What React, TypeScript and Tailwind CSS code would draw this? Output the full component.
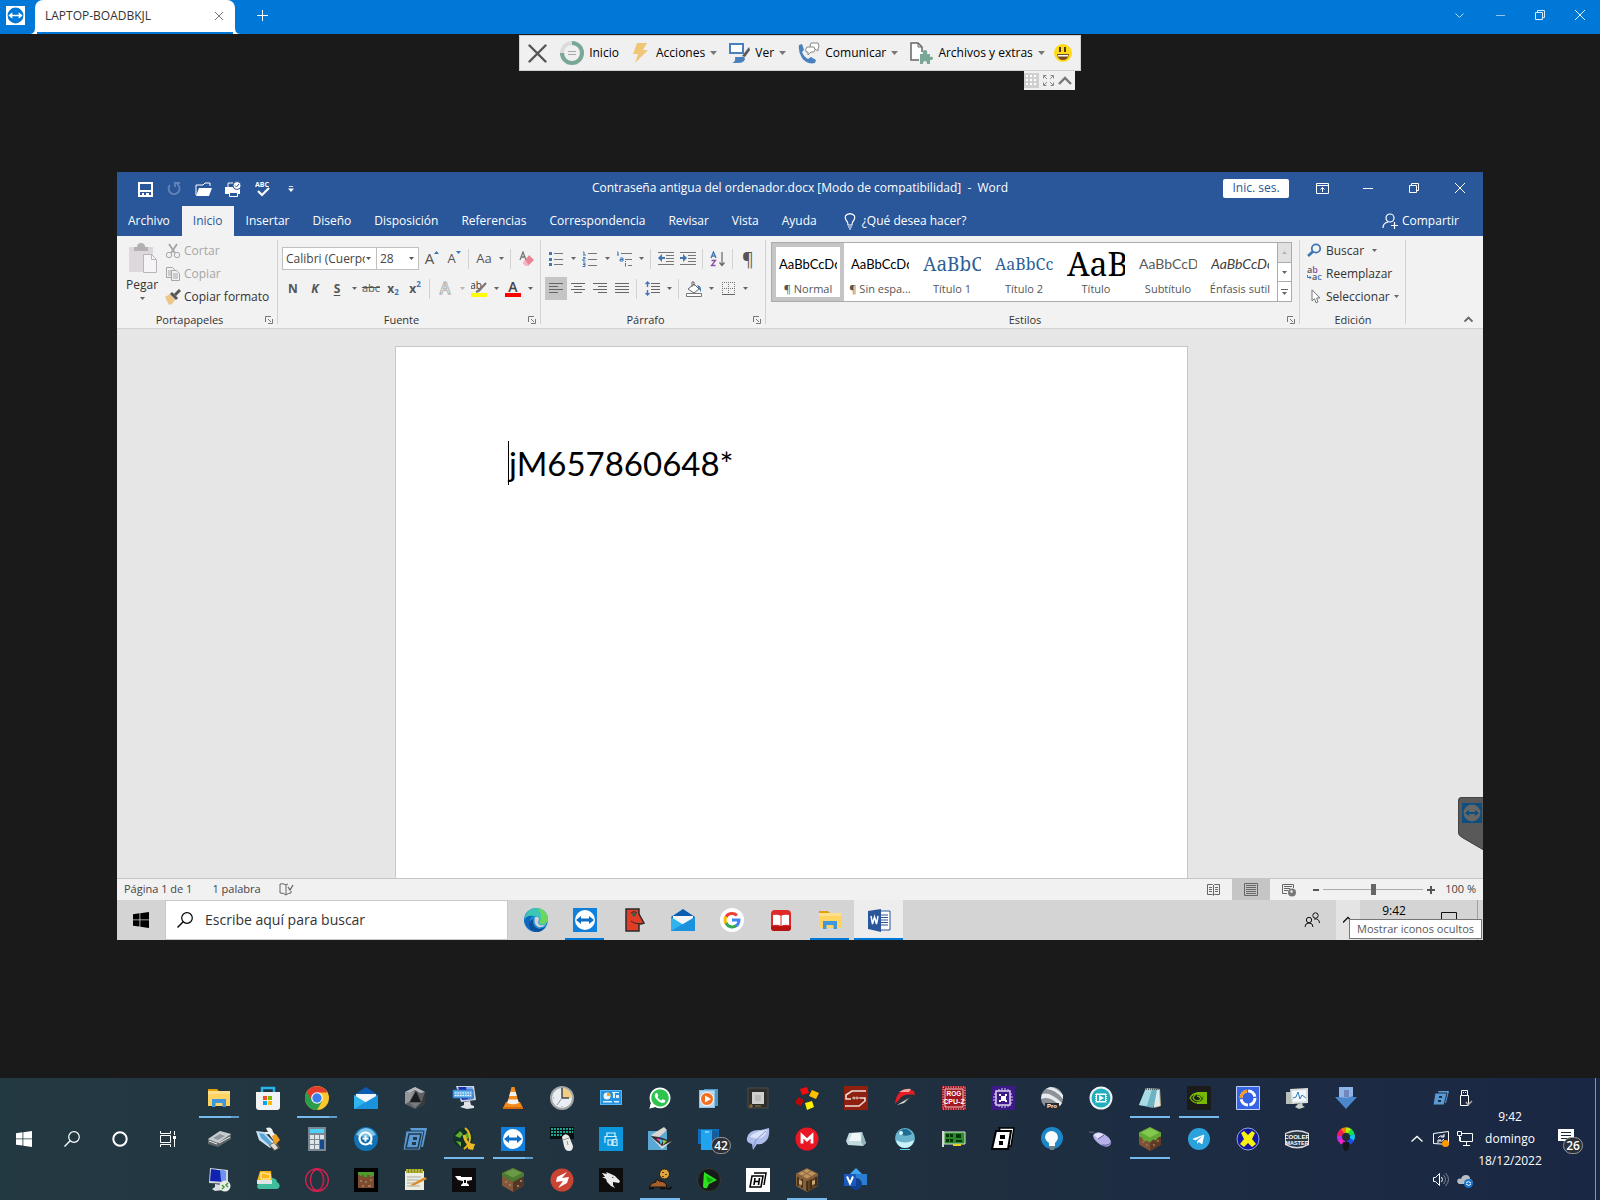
import { useState, type ReactNode } from 'react';
import { FaTelegramPlane, FaWhatsapp } from 'react-icons/fa';

function Svg({ size = 24, box = 24, children }: { size?: number; box?: number; children: ReactNode }) {
  return (
    <svg width={size} height={size} viewBox={`0 0 ${box} ${box}`} fill="none" aria-hidden="true" className="shrink-0">
      {children}
    </svg>
  );
}

function Caret({ className = 'text-[#666666]' }: { className?: string }) {
  return (
    <svg width="5" height="3" viewBox="0 0 5 3" aria-hidden="true" className={`shrink-0 ${className}`}>
      <path d="M0 0h5L2.500 3z" fill="currentColor" />
    </svg>
  );
}

/* ---------- application icons, 24x24 ---------- */

const explorer = (
  <Svg>
    <path d="M1 3h9l2 2v4H1z" fill="#e0a10b" />
    <path d="M1 5h22v15H1z" fill="#ffd462" />
    <path d="M1 5h22v3H1z" fill="#ffe08a" />
    <path d="M5 13h14v8h-3.500v-4h-7v4H5z" fill="#3f97dd" />
  </Svg>
);

const store = (
  <Svg>
    <path d="M6 6V2h12v4" stroke="#26b4ea" strokeWidth="2.500" />
    <path d="M0 6h24v15q0 3-3 3H3q-3 0-3-3z" fill="#f1f2f3" />
    <path d="M7 10h4v4H7z" fill="#f25022" />
    <path d="M12 10h4v4h-4z" fill="#7fba00" />
    <path d="M7 15h4v4H7z" fill="#00a4ef" />
    <path d="M12 15h4v4h-4z" fill="#ffb900" />
  </Svg>
);

const chrome = (
  <Svg>
    <circle cx="12" cy="12" r="12" fill="#fbc62c" />
    <path d="M1.600 6A12 12 0 0 0 12 24l5.200-9L12 12z" fill="#2a9c4a" />
    <path d="M1.800 5.800 7 14.500 12 12V6.500h10.500A12 12 0 0 0 1.800 5.800z" fill="#e33b2e" />
    <circle cx="12" cy="12" r="5.800" fill="#fff" />
    <circle cx="12" cy="12" r="4.700" fill="#3b7ded" />
  </Svg>
);

const mail = (
  <Svg>
    <path d="M0 9 12 1l12 8v3H0z" fill="#0a5cb3" />
    <path d="M2 8h20v6L12 19 2 14z" fill="#f3f6f9" />
    <path d="m0 9 12 7.500L24 9v14H0z" fill="#2fb4ef" />
    <path d="M24 9 0 23h24z" fill="#1a92dd" />
  </Svg>
);

const hexagon = (
  <Svg>
    <path d="m12 1 10 5v12l-10 5-10-5V6z" fill="#5d6165" />
    <path d="m12 1 10 5-5 1-5-3-5 3-5-1z" fill="#b5b9bc" />
    <path d="M22 6v12l-10 5 6-6z" fill="#383b3e" />
    <path d="m13 5 5 11H7z" fill="#1a1c1e" />
    <path d="M2 6v12l4-2 6-11-5 2z" fill="#94989b" />
    <path d="m7 17 5 5 5-5z" fill="#777b7f" />
  </Svg>
);

const computer = (
  <Svg>
    <path d="M4 0h18l2 14-15 2z" fill="#cdd5df" />
    <path d="M6 1h14l2 12-12 1z" fill="#1b2fb5" />
    <path d="m14 1 6 0 2 12-6 0z" fill="#7fa5ef" />
    <path d="M1 4h20v8H1z" fill="#67b5ee" stroke="#2666b4" />
    <path d="M3 7h16M3 9.500h16" stroke="#fff" strokeDasharray="1.500 1" />
    <path d="m12 16 6-1 1 4 3 1v2l-7 1-7-2 4-2z" fill="#dfe3e8" />
  </Svg>
);

const vlc = (
  <Svg>
    <path d="M5 16h14l3 6H2z" fill="#f08a1c" />
    <path d="M10.500 1h3L18 18q-6 3-12 0z" fill="#f58c1b" />
    <path d="M9.400 6h5.200l1.200 4H8.200z" fill="#f2f2f2" />
    <path d="M7.200 13.500h9.600l1 3.500q-6 2.500-11.600 0z" fill="#f2f2f2" />
    <path d="M2 21h20v2H2z" fill="#d66a0b" />
  </Svg>
);

const clock = (
  <Svg>
    <circle cx="12" cy="12" r="12" fill="#a3a6a7" />
    <circle cx="12" cy="12" r="10" fill="#e9eef2" />
    <path d="M12 12V2a10 10 0 0 1 10 10z" fill="#f0cf83" />
    <path d="M12 2v10h7" stroke="#3f4a52" strokeWidth="1.500" />
    <path d="m12 12-5 7M12 20v1M3 12h1" stroke="#8b979f" />
  </Svg>
);

const controlPanel = (
  <Svg>
    <path d="M1 4h22v15H1z" fill="#53b8f5" />
    <path d="M2 5h20v13H2z" fill="#2692df" />
    <circle cx="8" cy="10" r="3.500" fill="#e7f5ff" />
    <path d="M8 10V6.500A3.500 3.500 0 0 1 11.500 10z" fill="#f5a623" />
    <path d="M14 7h2v5h-2zM17 9h3v3h-3zM13 6h7v1h-7zM4 15h9v1.500H4zM15 15h5v1.500h-5z" fill="#d9f0ff" />
  </Svg>
);

const whatsapp = (
  <svg width="24" height="24" viewBox="0 0 24 24" aria-hidden="true">
    <circle cx="12" cy="12" r="10" fill="#2fc350" />
    <path d="m1.500 22.500 2-7 5 5z" fill="#fff" />
    <FaWhatsapp x={0} y={0} size={24} color="#fff" />
  </svg>
);

const mediaPlayer = (
  <Svg>
    <path d="M7 3h14v17H7z" fill="#4c98c9" />
    <path d="M2 4h16v18H2z" fill="#8fc2e4" />
    <path d="M3 5h14v16H3z" fill="#b7d9ef" />
    <circle cx="10" cy="13" r="6.500" fill="#f26f21" stroke="#fff" />
    <path d="m8 9.500 6 3.500-6 3.500z" fill="#fff" />
  </Svg>
);

const processor = (
  <Svg>
    <path d="M2 2h20v20H2z" fill="#2e2e2c" stroke="#4e4d47" />
    <path d="M6 6h12v12H6z" fill="#d0d0ce" />
    <path d="m9 9h6v6H9z" fill="#bcbcba" />
    <path d="M4 19h2v2H4zM9 20h6" stroke="#99803a" />
  </Svg>
);

const squares = (
  <Svg>
    <path d="m5 3 7-2 2 6-7 2z" fill="#f20d0d" />
    <path d="m17 4 7 3-3 6-7-3z" fill="#ffc000" />
    <path d="m3 11 6 3-3 6-6-3z" fill="#bd0606" />
    <path d="m10 17 7-2 2 6-7 3z" fill="#fdf300" />
  </Svg>
);

const redS = (
  <Svg>
    <path d="M0 0h24v24H0z" fill="#8f2010" />
    <path d="M22 5H8L2 9v4h5M1 20h14l6-5v-3h-5" stroke="#eadfdc" strokeWidth="1.600" />
    <path d="M8 12h8M10 10.500v3M13 10.500v3" stroke="#e5cbc5" />
  </Svg>
);

const gauge = (
  <Svg>
    <path d="M2 18Q3 5 14 3l7 2 1 4Q10 7 6 14z" fill="#e51c23" />
    <path d="M6 6q6-4 12-3l-2 3z" fill="#f8a6a2" />
    <path d="m3 20 3-5 15-7-6 8-8 3z" fill="#2f3538" />
    <path d="m4 19 12-7-5 5z" fill="#e0e3e5" />
  </Svg>
);

const cpuz = (
  <Svg>
    <path d="M0 0h24v24H0z" fill="#a31521" />
    <path d="M1 1h22v22H1z" stroke="#f3d9db" strokeDasharray="1 1.500" />
    <path d="M3 3h18v18H3z" stroke="#f1c9cc" />
    <text x="12" y="10" textAnchor="middle" fontSize="6.500" fontWeight="700" fontFamily="Liberation Sans" fill="#fff">ROG</text>
    <text x="12" y="18" textAnchor="middle" fontSize="7" fontWeight="700" fontFamily="Liberation Sans" fill="#fff">CPU-Z</text>
  </Svg>
);

const chip = (
  <Svg>
    <path d="M0 0h24v24H0z" fill="#3d1a88" />
    <path d="M5 5h14v14H5z" stroke="#d9d0f0" strokeWidth="1.500" />
    <path d="M8 3v2M11 2v3M14 2v3M17 3v2M8 19v2M11 19v3M14 19v3M17 19v2M3 8h2M2 11h3M2 14h3M3 17h2M19 8h2M19 11h3M19 14h3M19 17h2" stroke="#d9d0f0" />
    <path d="M8 8h2v2H8zM14 8h2v2h-2zM8 14h2v2H8zM14 14h2v2h-2zM10 10h5v5h-5z" fill="#fff" />
  </Svg>
);

const earth = (
  <Svg>
    <circle cx="12" cy="12" r="11" fill="#8b9298" />
    <path d="M2 8q8-3 20 9l-2 3Q10 9 1 13zM6 3q9 0 17 10V9Q16 1 10 1z" fill="#e8ebee" />
    <path d="M5 17h14v6H5z" fill="#262a2d" />
    <text x="12" y="22" textAnchor="middle" fontSize="6" fontWeight="700" fontFamily="Liberation Sans" fill="#fff">Pro</text>
  </Svg>
);

const video = (
  <Svg>
    <circle cx="12" cy="12" r="11.500" fill="#eef4f5" />
    <circle cx="12" cy="12" r="9.500" fill="#21aebd" />
    <path d="M6 7.500h12v9H6z" fill="#fff" />
    <path d="M8 9h8v6H8z" fill="#21aebd" />
    <path d="M6.500 7v10M17.500 7v10" stroke="#21aebd" strokeDasharray="1 1" />
    <path d="m10 9 5 3-5 3z" fill="#fff" />
  </Svg>
);

const notepad = (
  <Svg>
    <path d="m9 2 13 1 1 17-7 2z" fill="#c9b58c" />
    <path d="m8 2 12 1-5 19L1 19z" fill="#6cb3c3" />
    <path d="m8 2 6 1L9 20l-8-1z" fill="#a8dbe3" />
    <path d="m19 4 2 0 1 16-6 1z" fill="#d9edf1" />
    <path d="M8 3h13" stroke="#5e676a" strokeWidth="2" strokeDasharray="1 1" />
  </Svg>
);

const nvidia = (
  <Svg>
    <path d="M0 0h24v24H0z" fill="#1b1b1b" />
    <path d="M10 6h10v12H10z" fill="#76b900" />
    <path d="M10 8q5 0 7 4-3 4-7 4" fill="#1b1b1b" />
    <path d="M10 7Q5 8 3 12q3 5 8 5 4-1 6-4-3-5-7-5-3 1-4 4 2 3 5 3 2-1 3-2-1-3-4-3" stroke="#76b900" strokeWidth="1.300" />
  </Svg>
);

const ring = (
  <Svg>
    <path d="M.5.500h23v23H.5z" fill="#3563e3" stroke="#bfd0fa" />
    <circle cx="12" cy="12" r="7" stroke="#fff" strokeWidth="3" strokeDasharray="9.500 1.500" />
    <path d="M5 12a7 7 0 0 1 6-7" stroke="#f59a1b" strokeWidth="3" />
  </Svg>
);

const monitor = (
  <Svg>
    <path d="M1 6h8v12H1z" fill="#b8bfba" />
    <path d="M5 3 23 2v15L7 18z" fill="#d9dedb" />
    <path d="m7 5 14-1v11L8 16z" fill="#f2f8fb" />
    <path d="m8 12 3-1 2-5 2 7 2-4 4 3" stroke="#2b80bd" />
    <path d="m13 18 4-1 1 3 2 1-6 2-4-2z" fill="#c9cecb" />
  </Svg>
);

const download = (
  <Svg>
    <path d="M5 1h14v10h4L12 23 1 11h4z" fill="#4c86cb" />
    <path d="M5 1h14v9q-6 3-14 1z" fill="#8db6e6" />
    <path d="M10 4h5v7h-5z" fill="#7187bd" />
  </Svg>
);

const drive = (
  <Svg>
    <path d="m1 12 12-8 11 3v5L11 20 1 17z" fill="#5f6669" />
    <path d="m1 12 12-8 11 3-13 9z" fill="#c4cacd" />
    <path d="m6 11 7-4 5 2-7 4z" fill="#8f979b" />
    <path d="m2 14 8 3M12 16l11-6" stroke="#e9ecee" />
  </Svg>
);

const usbTool = (
  <Svg>
    <path d="m0 4 8 1 11 11-5 5L3 13z" fill="#c9e2f3" />
    <path d="m3 6 5 1 8 9-2 3L5 11z" fill="#5aa4d8" />
    <path d="m13 18 7-4 4 7-6 3z" fill="#5c5651" />
    <path d="m14 18 4-2 4 5-3 2z" fill="#dedbd7" />
    <path d="M10 1q6-2 7 4l5 6-4 3-5-7q-4 1-5-2l4 0z" fill="#eff0f1" />
    <path d="m16 9 4-2 4 6-5 5z" fill="#f59f1e" />
  </Svg>
);

const calculator = (
  <Svg>
    <path d="M3 0h18v24H3z" fill="#7a8790" />
    <path d="M5 2h14v4H5z" fill="#4cd2f7" />
    <path d="M5 8h4v4H5zM10 8h4v4h-4zM15 8h4v4h-4zM5 13h4v4H5zM10 13h4v4h-4zM5 18h4v4H5zM10 18h4v4h-4z" fill="#dfe5e9" />
    <path d="M15 13h4v9h-4z" fill="#144a8f" />
  </Svg>
);

const zoomPlus = (
  <Svg>
    <circle cx="12" cy="12" r="12" fill="#1272b6" />
    <path d="M2 8Q6 1 12 1t10 7q-10 4-20 0z" fill="#7cc3ea" />
    <circle cx="11.500" cy="11.500" r="6" stroke="#fff" strokeWidth="2.200" />
    <path d="M11.500 8.500v6M8.500 11.500h6M16 16l2 1" stroke="#fff" strokeWidth="2" />
  </Svg>
);

const blueLayers = (
  <Svg>
    <path d="M7 1h17l-4 19h-4z" fill="#5b9bd5" />
    <path d="M3 4h18l-4 19H0z" fill="#5b9bd5" stroke="#22394a" />
    <path d="M6 7h12l-3 14H3z" stroke="#22394a" strokeWidth="1.500" />
    <path d="M10 10h4v3h-4zM9 15h4v3H9z" fill="#22394a" />
  </Svg>
);

const jdownloader = (
  <Svg>
    <circle cx="11" cy="11" r="10" fill="#12302a" />
    <path d="m3 9 5-5 3 3-3 4zM4 14l5 1v5zM12 9l4-4 2 5-4 3z" fill="#5fae2c" />
    <path d="M13 1q5 4 5 10t-6 11" stroke="#eab81e" strokeWidth="2" />
    <path d="M12 8q2 9 7 10" stroke="#eaba22" strokeWidth="3" />
    <path d="m15 16 8 1-2 6-5-1z" fill="#eaba22" />
  </Svg>
);

const teamviewer = (
  <Svg>
    <path d="M0 0h24v24H0z" fill="#1080dc" />
    <circle cx="12" cy="12" r="10" fill="#fff" />
    <path d="m3 12 5-4v2.500h8V8l5 4-5 4v-2.500H8V16z" fill="#0d6fc8" />
  </Svg>
);

const keyboardMouse = (
  <Svg>
    <path d="M0 0h24v12H0z" fill="#05100f" />
    <path d="M1 2h22M1 5h22M1 8h12" stroke="#16a394" strokeWidth="2" strokeDasharray="2 1" />
    <path d="M12 10q3-5 7-1l4 10q0 5-4 5t-5-5z" fill="#ebebe9" />
    <path d="m13 13 6-2M17 14l1 4" stroke="#8f8f8c" />
  </Svg>
);

const printer = (
  <Svg>
    <path d="M0 0h24v24H0z" fill="#0c97dc" />
    <path d="M8 9V6h8v3M6 16V9.500h11V12M9 13h4v5H9zM14 12.500h4v6h-4zM15 15h2" stroke="#d9f1fd" strokeWidth="1.200" />
  </Svg>
);

const scanner = (
  <Svg>
    <path d="M0 4h19v19H0z" fill="#5aa8d4" />
    <path d="m3 8 13-8 3 3L9 12z" fill="#dad6d1" />
    <path d="m3 9 8 1 12 4-9 7z" fill="#302d30" />
    <path d="m8 12 3-1 2 5z" fill="#e8338e" />
    <path d="m11 12 4 1-2 5z" fill="#3abde8" />
    <path d="m15 13 4 1-4 4z" fill="#92d13a" />
    <path d="m3 10 11 9 10-5-10 8z" fill="#dcd8d5" />
  </Svg>
);

const yourPhone = (
  <Svg>
    <path d="M1 2h21v15H1z" fill="#0f6cb6" />
    <path d="M4 3h11v20H4z" fill="#22a3ef" />
    <path d="M8 5h4" stroke="#d2edfc" />
    <path d="M15 4h6v12h-6z" fill="#185c9b" />
  </Svg>
);

const feather = (
  <Svg>
    <path d="M1 11Q3 2 15 3l8-2q1 9-3 13-4 4-9 3l-4 6-1-6q-6-1-5-6z" fill="#aebde9" />
    <path d="M4 10q4-6 17-7-1 7-9 9z" fill="#dbe2fa" />
    <path d="m7 21 3-8 10-9" stroke="#7d90d0" />
  </Svg>
);

const mega = (
  <Svg>
    <circle cx="12" cy="12" r="11.500" fill="#ea1623" />
    <path d="M7 16.500v-8l5 4.500 5-4.500v8" stroke="#fff" strokeWidth="2.800" />
  </Svg>
);

const whiteKey = (
  <Svg>
    <path d="m5 6 13-1 4 11-3 3-15-1-2-4z" fill="#c2dade" />
    <path d="m8 6 8 0 2 8H5z" fill="#eef6f7" />
    <path d="m18 5 4 11-3 3-2-5z" fill="#91b3ba" />
  </Svg>
);

const orb = (
  <Svg>
    <circle cx="12" cy="11" r="10" fill="#6ab3cd" />
    <path d="M5 6q3-4 7-4t7 5q-7 4-14-1z" fill="#1e6d94" />
    <path d="M3 13q9 5 18 0-2 8-9 8t-9-8z" fill="#c9f2fa" />
    <circle cx="8" cy="6" r="2" fill="#def7fd" />
    <path d="M7 22.500h10" stroke="#57d3e2" />
  </Svg>
);

const card = (
  <Svg>
    <path d="M1 4v16" stroke="#d0d4d0" strokeWidth="2" />
    <path d="M2 5h21v12H2z" fill="#2a8a2b" stroke="#d9e5d8" />
    <path d="M4 7h3v3H4zM8 7h3v3H8zM4 12h3v3H4zM8 12h3v3H8zM14 7h5v4h-5zM14 13h6v2h-6z" fill="#07330a" />
    <path d="M11 17h8v2h-8z" fill="#edd01c" />
  </Svg>
);

const whiteLayers = (
  <Svg>
    <path d="M8 1h15l-3 18h-4z" fill="#fff" stroke="#000" strokeWidth="1.500" />
    <path d="M5 4h15l-3 18H1z" fill="#fff" stroke="#000" strokeWidth="2" />
    <path d="M9 8h5v4H9zM8 14h4v4H8z" fill="#000" />
  </Svg>
);

const lightbulb = (
  <Svg>
    <circle cx="12" cy="11" r="11" fill="#1c86c7" />
    <path d="M5 10a6.500 6.500 0 1 1 13 1q-1 3-3 5v3H9v-3q-4-3-4-6z" fill="#f8fbfd" />
    <path d="M9 19h6l-1 4h-4z" fill="#6f8088" />
  </Svg>
);

const purpleMouse = (
  <Svg>
    <path d="M0 5q5-1 8 3" stroke="#6e6a7e" />
    <path d="M4 8q4-5 11-1 8 5 7 10-3 5-10 1-8-5-8-10z" fill="#b5b0e8" />
    <path d="M5 8q4-4 10 0l-6 4z" fill="#e6e3fc" />
    <path d="m9 12 6-4M13 18q8 1 9-3" stroke="#5d559e" />
  </Svg>
);

const grassBlock = (
  <Svg>
    <path d="m12 0 11 5.500v12L12 24 1 17.500v-12z" fill="#7d5236" />
    <path d="m12 24 11-6.500v-9L12 14z" fill="#5f3b25" />
    <path d="m12 0 11 5.500v4l-3 1-2 3-3-1-3 3-3-2-3 1-2-4-3-1v-4z" fill="#63a736" />
    <path d="m12 1 9 4.500-9 5-9-5z" fill="#82c94e" />
    <path d="M4 14h2v2H4zM8 17h2v2H8zM15 17h2v2h-2zM19 13h2v2h-2z" fill="#96694a" />
  </Svg>
);

const darkGrassBlock = (
  <Svg>
    <path d="m12 0 11 5v12.500L12 24 1 17.500V5z" fill="#82593d" />
    <path d="m12 24 11-6.500V8L12 13z" fill="#523726" />
    <path d="m12 0 11 5v3l-11 6L1 8V5z" fill="#4d7a31" />
    <path d="m12 1 9 4-9 4.500L3 5z" fill="#699a46" />
    <path d="M4 13h2v2H4zM8 16h2v2H8zM16 17h2v2h-2zM19 12h2v2h-2z" fill="#a37b58" />
  </Svg>
);

const telegram = (
  <span className="flex size-[22px] items-center justify-center rounded-full bg-[#2ca2dc] text-white">
    <FaTelegramPlane size={13} />
  </span>
);

const yellowX = (
  <Svg>
    <circle cx="12" cy="12" r="11" fill="#1719a2" stroke="#8aa4dc" />
    <path d="m5 6 3-2 4 4 4-4 3 2-3 6 4 5-4 3-4-4-4 4-4-3 4-5z" fill="#f8f00d" />
  </Svg>
);

const coolerMaster = (
  <Svg>
    <path d="M0 6q12-6 24 0v12q-12 7-24 0z" fill="#d8dadc" />
    <path d="M1 7q11-5 22 0v10q-11 6-22 0z" fill="#2b3944" />
    <text x="12" y="12" textAnchor="middle" fontSize="6" fontWeight="700" fontFamily="Liberation Sans" fill="#fff">COOLER</text>
    <text x="12" y="18" textAnchor="middle" fontSize="5.500" fontWeight="700" fontFamily="Liberation Sans" fill="#fff">MASTER</text>
  </Svg>
);

const rgbBulb = (
  <Svg>
    <g strokeWidth="5.500">
      <path d="M6.500 13A6 6 0 0 1 6 8" stroke="#b92bf0" />
      <path d="M6 9a6 6 0 0 1 3-5" stroke="#f31b5b" />
      <path d="M8.500 4.200A6 6 0 0 1 12 3" stroke="#ff7a00" />
      <path d="M12 3a6 6 0 0 1 4 1.500" stroke="#b4f000" />
      <path d="M15.500 4a6 6 0 0 1 2.500 4" stroke="#16e04a" />
      <path d="M18 8a6 6 0 0 1-1 5" stroke="#11c5f0" />
      <path d="M17.500 12 15 16" stroke="#1c4df0" />
      <path d="M6.500 12 9 16" stroke="#f022c8" />
    </g>
    <circle cx="12" cy="10" r="4" fill="#202b36" />
    <path d="M9 15h6v6l-2 3h-2l-2-3z" fill="#15181b" />
  </Svg>
);

const remoteDesktop = (
  <Svg>
    <path d="m3 0 18 2v14L2 15z" fill="#ced4da" />
    <path d="m4 1 14 2v11L3 13z" fill="#1023b0" />
    <path d="m13 2 6 1v11l-5-1z" fill="#6d92f2" />
    <path d="m8 16 7 1v3l2 2-9 1-3-2 3-2z" fill="#d8dcdf" />
    <circle cx="18" cy="18" r="5.500" fill="#e9ece9" />
    <path d="m15 17 2 2-2 2M21 15l-2 2 2 2" stroke="#3f9a3a" strokeWidth="1.500" />
  </Svg>
);

const cloudDrive = (
  <Svg>
    <path d="M3 21q-3-1-1-5 3-2 6 0 2-8 9-6 4 1 4 4 4 2 2 6l-2 1z" fill="#3fbd9d" />
    <path d="M4 3h11l1 10H1z" fill="#f7b516" />
    <path d="M1 12h15v4H1z" fill="#dfe4e4" />
    <path d="M5 5h4l1 1h4v5H5z" stroke="#fff6d5" />
  </Svg>
);

const operaGx = (
  <Svg>
    <circle cx="12" cy="12" r="11.300" stroke="#dc2050" strokeWidth="1.300" />
    <ellipse cx="12" cy="12" rx="6.500" ry="10.500" stroke="#dc2050" strokeWidth="1.300" />
    <path d="M13 2q6 2 6 10t-6 10" stroke="#b71a43" />
  </Svg>
);

const dirt = (
  <Svg>
    <path d="M0 0h24v24H0z" fill="#000" />
    <path d="M4 4h16v16H4z" fill="#7d4d32" />
    <path d="M4 4h16v4h-2v1h-2V7h-3v2h-3V7H8v1H6V7H4z" fill="#4f9a2c" />
    <path d="M6 12h2v2H6zM11 13h2v2h-2zM16 11h2v2h-2zM8 17h2v2H8zM14 17h3v2h-3z" fill="#a57453" />
  </Svg>
);

const notes = (
  <Svg>
    <path d="M2 3h19v19H2z" fill="#ececdf" />
    <path d="M3 1h17v4H3z" fill="#8a8d1c" />
    <path d="M4 1v4M7 1v4M10 1v4M13 1v4M16 1v4M19 1v4" stroke="#d9d854" />
    <path d="M4 9h14M4 12h12M4 15h9M4 18h13" stroke="#a9aaa3" />
    <path d="m9 16 13-7 2 2-12 6-5 1z" fill="#d98a2a" />
  </Svg>
);

const anvil = (
  <Svg>
    <path d="M0 0h24v24H0z" fill="#0c0c0c" />
    <path d="M3 8h6v1h11v3l-5 1v2l2 2v1H9v-1l2-2v-2l-5-1z" fill="#fff" />
    <path d="M12 12h2v3h-2z" fill="#0c0c0c" />
  </Svg>
);

const redBolt = (
  <Svg>
    <circle cx="12" cy="12" r="11.500" fill="#cb4333" />
    <path d="m17 4-10 5-1 5 7-1-5 7 9-5 2-6-7 1z" fill="#fff" />
  </Svg>
);

const wolf = (
  <Svg>
    <path d="M0 0h24v24H0z" fill="#0d0d0d" />
    <path d="M3 5 8 6 7 4l5 2 4 2 5 5-1 2-6-1 0 3 2 3-4-2-4-4-1-3-4-2 3 0z" fill="#e9e9e9" />
    <path d="m13 9 2 1-2 0z" fill="#0d0d0d" />
  </Svg>
);

const mouseCookie = (
  <Svg>
    <circle cx="16.500" cy="6" r="5" fill="#dda63f" stroke="#2b1d0c" />
    <path d="M14 4h2v1h-2zM17 6h2v1h-2zM14 8h2v1h-2z" fill="#5e3713" />
    <path d="M1 19q3-5 7-5V12q2-1 3 1 7 0 8 6z" fill="#a5602c" stroke="#1a0f08" />
    <path d="M18 20.500q5 1 5-2M1 20.500h5M12 20.500h5" stroke="#0c0a09" strokeWidth="1.500" />
  </Svg>
);

const greenPlay = (
  <Svg>
    <circle cx="12" cy="12" r="11.500" fill="#171b19" stroke="#353c38" />
    <path d="m7 4 13 8-8 4-2 4q-4 1-4-2z" fill="#2be31f" />
    <path d="m9 8 8 4-6 3z" fill="#14a80d" />
  </Svg>
);

const hLogo = (
  <Svg>
    <path d="M0 0h24v24H0z" fill="#fff" />
    <path d="M8 5h12l-2 12" stroke="#000" strokeWidth="1.500" />
    <path d="M6 8h11l-2 11H4z" stroke="#000" strokeWidth="1.500" />
    <path d="m9 10-1 7M13.500 10l-1 7M9 13.500h4" stroke="#000" strokeWidth="1.600" />
  </Svg>
);

const craftingTable = (
  <Svg>
    <path d="m12 0 11 5.500V18L12 24 1 18V5.500z" fill="#86603a" />
    <path d="m12 24 11-6V8L12 13z" fill="#614123" />
    <path d="m12 1 9 4.500-9 5-9-5z" fill="#bf9460" />
    <path d="M3 9v9M7 11v9M12 13v10M16 12v9M21 9v9" stroke="#3a2612" strokeWidth="1.500" />
    <path d="m4 12 3 1v4l-3-1zM17 13l3-1v4l-3 1z" fill="#c9a878" />
    <path d="m7 3 9 5M16 3 7 8" stroke="#8d6538" />
  </Svg>
);

const visio = (
  <Svg>
    <path d="m12 0 7 7-7 6-7-6z" fill="#3fa5ee" />
    <path d="M12 6h11v11H12z" fill="#2b7cd3" />
    <circle cx="12" cy="16" r="6" fill="#103f91" />
    <path d="M0 6h12v12H0z" fill="#185abd" />
    <path d="m3 8.500 3 7 3-7" stroke="#fff" strokeWidth="2" />
  </Svg>
);

const edge = (
  <Svg>
    <circle cx="12" cy="12" r="12" fill="#1a8fd4" />
    <path d="M1 9Q4 0 13 0q10 1 11 11 0 5-6 6-4 0-3-3 2-5-4-6Q5 7 1 12z" fill="#3cc7b5" />
    <path d="M14 0q9 2 10 11 0 5-6 5-3-1-2-3 3-6-2-13z" fill="#6bd75f" />
    <path d="M0 13q2-6 9-5-4 2-3 8 2 6 9 8-12 1-15-11z" fill="#1167bd" />
    <path d="M9 11q-1 8 6 10 4 0 7-3-3 6-10 6-7-2-7-8 1-4 4-5z" fill="#0d4f9c" />
    <path d="M11 9q4-1 4 3-2 3 1 5 3 1 6-1-3 4-8 3-5-3-3-10z" fill="#d3d3d3" />
  </Svg>
);

const face = (
  <Svg>
    <path d="M4 1h13v5l5 9-3 1h-2v7H4z" fill="#e03c26" stroke="#2b2b2b" strokeWidth="1.500" />
    <circle cx="12" cy="6.500" r="2" fill="#3c5c4c" />
    <path d="M9 5q3-3 6 0M9 13q3 3 8 2.500" stroke="#2b2b2b" />
  </Svg>
);

const google = (
  <Svg>
    <circle cx="12" cy="12" r="12" fill="#fff" />
    <path d="M17 7.500A7 7 0 0 0 6 9" stroke="#ea4335" strokeWidth="3" />
    <path d="M6 8.500a7 7 0 0 0 0 7" stroke="#fbbc05" strokeWidth="3" />
    <path d="M6 15a7 7 0 0 0 10.500 2.500" stroke="#34a853" strokeWidth="3" />
    <path d="M12 12h7q0 4-3 6" stroke="#4285f4" strokeWidth="3" />
  </Svg>
);

const book = (
  <Svg>
    <rect x="2" y="2" width="20" height="21" rx="4" fill="#df2a2a" />
    <path d="M2 18h20v2q0 3-3 3H5q-3 0-3-3z" fill="#b81313" />
    <path d="M4 7q5-1 8 1 3-2 8-1v10q-5-1-8 1-3-2-8-1z" fill="#fff" />
    <path d="M12 8v10" stroke="#df2a2a" />
  </Svg>
);

const word = (
  <Svg>
    <path d="M12 3h11v19H12z" fill="#fff" stroke="#2b579a" />
    <path d="M14 7h7M14 9.500h7M14 12h7M14 14.500h7M14 17h7" stroke="#2b579a" />
    <path d="m1 3 13-2v23L1 21z" fill="#2b579a" />
    <path d="m4 8 1.500 8 2-7 2 7L11 8" stroke="#fff" strokeWidth="1.500" />
  </Svg>
);

function WindowsLogo() {
  return (
    <Svg size={16} box={16}>
      <path d="M0 2.200 6.500 1.300v6.200H0zM7.300 1.200 16 0v7.500H7.300zM0 8.300h6.500v6.300L0 13.700zM7.300 8.300H16V16l-8.700-1.200z" fill="currentColor" />
    </Svg>
  );
}

function SearchGlyph() {
  return (
    <Svg size={16} box={16}>
      <circle cx="10" cy="6" r="5.300" stroke="currentColor" strokeWidth="1.200" />
      <path d="M6.200 9.800.5 15.500" stroke="currentColor" strokeWidth="1.300" />
    </Svg>
  );
}

/* ---------- remote session chrome ---------- */

function SessionTabs() {
  return (
    <header className="flex h-[34px] shrink-0 items-stretch bg-[#0078d7] text-white">
      <div className="flex w-[35px] items-center pl-[6px] pb-1">
        <Svg size={19} box={24}>
          <path d="M0 0h24v24H0z" fill="#fff" />
          <circle cx="12" cy="12" r="10" fill="#0078d7" />
          <path d="m3 12 5-4v3h8V8l5 4-5 4v-3H8v3z" fill="#fff" />
        </Svg>
      </div>
      <div className="relative flex w-[200px] items-center justify-between rounded-t-lg bg-white pb-[2px] pl-[10px] pr-3 text-xs text-[#333333]">
        <span>LAPTOP-BOADBKJL</span>
        <button type="button" aria-label="Cerrar pestaña">
          <Svg size={8} box={8}><path d="m0 0 8 8M8 0 0 8" stroke="#777" /></Svg>
        </button>
        <span className="absolute inset-x-[2px] bottom-0 h-[2px] bg-[#0078d7]" />
        <svg width="6" height="6" viewBox="0 0 6 6" className="absolute -left-[6px] bottom-0" aria-hidden="true"><path d="M6 0v6H0q6 0 6-6z" fill="#fff" /></svg>
        <svg width="6" height="6" viewBox="0 0 6 6" className="absolute -right-[6px] bottom-0" aria-hidden="true"><path d="M0 0v6h6Q0 6 0 0z" fill="#fff" /></svg>
      </div>
      <button type="button" aria-label="Nueva pestaña" className="flex w-[55px] items-center justify-center pb-1">
        <Svg size={11} box={11}><path d="M5.500 0v11M0 5.500h11" stroke="#fff" /></Svg>
      </button>
      <div className="ml-auto flex items-center pb-1">
        <button type="button" aria-label="Opciones" className="flex w-[41px] justify-center">
          <Svg size={9} box={9}><path d="m.5 2.500 4 4 4-4" stroke="#b9dcf7" /></Svg>
        </button>
        <button type="button" aria-label="Minimizar" className="flex w-10 justify-center">
          <Svg size={9} box={9}><path d="M0 4.500h9" stroke="#8fc6f0" /></Svg>
        </button>
        <button type="button" aria-label="Restaurar" className="flex w-10 justify-center">
          <Svg size={10} box={10}><path d="M.5 2.500h7v7h-7zM2.500 2V.5h7v7H8" stroke="#d5eafa" /></Svg>
        </button>
        <button type="button" aria-label="Cerrar" className="flex w-10 justify-center">
          <Svg size={10} box={10}><path d="m0 0 10 10M10 0 0 10" stroke="#e6f3fd" /></Svg>
        </button>
      </div>
    </header>
  );
}

function ToolItem({ icon, label, menu = true }: { icon: ReactNode; label: string; menu?: boolean }) {
  return (
    <button type="button" className="flex items-center gap-[5px] whitespace-nowrap px-[3px]">
      {icon}
      <span>{label}</span>
      {menu && <svg width="7" height="4" viewBox="0 0 7 4" aria-hidden="true"><path d="M0 0h7L3.500 4z" fill="#777" /></svg>}
    </button>
  );
}

function SessionToolbar() {
  return (
    <div className="mx-auto mt-px flex w-[562px] flex-col">
      <div className="flex h-9 items-center justify-between border border-[#d0d0d0] bg-[#f0f0f0] pl-2 pr-2 text-xs text-black">
        <button type="button" aria-label="Cerrar sesión" className="mr-1">
          <Svg size={19} box={19}><path d="m1.500 1.500 16 16M17.500 1.500l-16 16" stroke="#555" strokeWidth="2.400" strokeLinecap="round" /></Svg>
        </button>
        <ToolItem
          menu={false}
          label="Inicio"
          icon={
            <Svg>
              <circle cx="12" cy="12" r="10" stroke="#dcdcdc" strokeWidth="4" />
              <path d="M12 2a10 10 0 1 1-10 10" stroke="#79a897" strokeWidth="4" />
              <path d="M8 10.500h8M8 13.500h8" stroke="#a9a9a9" />
            </Svg>
          }
        />
        <ToolItem label="Acciones" icon={<Svg size={20} box={20}><path d="M6 0h10l-4 7h5L4 20l3-9H2z" fill="#f0c777" /></Svg>} />
        <ToolItem
          label="Ver"
          icon={
            <Svg size={21} box={21}>
              <path d="M1 1h13v9H1z" fill="#fff" stroke="#4a80bd" strokeWidth="2" />
              <path d="M6 14h6q4-1 4 2-1 4-7 4H3q4-1 3-6z" fill="#4a80bd" />
              <path d="m20 4 1 3-5 7-3-1z" fill="#5a5a5a" />
            </Svg>
          }
        />
        <ToolItem
          label="Comunicar"
          icon={
            <Svg size={22} box={22}>
              <path d="m1 3 3-1 2 6-2 2q2 5 6 7l3-2 5 3-1 3Q9 23 4 16 0 10 1 3z" fill="#4a80bd" />
              <path d="M13 1h7q2 3 0 6v2l-3-2h-4q-2-3 0-6z" fill="#fff" stroke="#888" />
              <path d="M9 5h7q2 3 0 5h-3l-3 3v-3H8q-1-3 1-5z" fill="#fff" stroke="#888" />
            </Svg>
          }
        />
        <ToolItem
          label="Archivos y extras"
          icon={
            <Svg size={23} box={23}>
              <path d="M9 18H1V1h7l4 4v5" fill="#fff" stroke="#666" strokeWidth="1.500" />
              <path d="M8 1v4h4" stroke="#666" />
              <path d="M10 12h3q-1-4 2-4t2 4h3v3q3-1 3 1t-3 2v4h-3q0-3-2-3t-2 3h-3z" fill="#79a897" />
            </Svg>
          }
        />
        <button type="button" aria-label="Comentarios">
          <Svg size={18} box={18}>
            <circle cx="9" cy="9" r="9" fill="#ffd91a" />
            <path d="M6 3v5M11 3v5" stroke="#4e3a13" strokeWidth="2" />
            <path d="M3 10h12q-1 6-6 6t-6-6z" fill="#7b4a1c" />
            <path d="M4 11h10v1.500H4z" fill="#fff" />
          </Svg>
        </button>
      </div>
      <div className="mr-[6px] flex h-[19px] w-[51px] items-center justify-between self-end bg-[#f0f0f0] pr-[3px]">
        <Svg size={15} box={15}>
          <path d="M0 0h15v15H0z" fill="#d0d0d0" />
          <path d="M2 3h11M2 7h11M2 11h11" stroke="#fff" strokeWidth="2" strokeDasharray="2 2" />
        </Svg>
        <Svg size={11} box={11}>
          <path d="M.5 3.500v-3h3M7.500.5h3v3M.5 7.500v3h3M10.500 7.500v3h-3M1 1l3 3M10 1 7 4M1 10l3-3M10 10 7 7" stroke="#888" />
        </Svg>
        <Svg size={14} box={14}><path d="m1 10 6-6 6 6" stroke="#777" strokeWidth="2.400" /></Svg>
      </div>
    </div>
  );
}

/* ---------- Word ---------- */

function WordTitleBar() {
  return (
    <div className="relative flex h-[34px] items-center justify-between text-xs text-white">
      <div className="flex items-center gap-[13px] pl-[21px]">
        <button type="button" aria-label="Guardar">
          <Svg size={15} box={15}>
            <path d="M1 1h13v13H1z" stroke="#fff" strokeWidth="2" />
            <path d="M2 8h11v2H2zM4 11h7v3H4z" fill="#fff" />
            <path d="M6 11h2v2H6z" fill="#2a579a" />
          </Svg>
        </button>
        <button type="button" aria-label="Deshacer">
          <Svg size={16} box={16}><path d="M4 4a5.500 5.500 0 1 0 7-1M9 6V2h5" stroke="#6384b8" strokeWidth="1.800" /></Svg>
        </button>
        <button type="button" aria-label="Abrir">
          <Svg size={17} box={17}>
            <path d="M1 14V4h7l2-2h5v3" stroke="#fff" />
            <path d="M4 7h13l-3 8H1z" fill="#fff" />
          </Svg>
        </button>
        <button type="button" aria-label="Vista previa de impresión">
          <Svg size={17} box={17}>
            <path d="M0 6h15v7H0z" fill="#fff" />
            <path d="M3 6V2h5M4.500 11.500h8v4h-8z" stroke="#fff" fill="#2a579a" />
            <circle cx="12" cy="4.500" r="4" fill="#fff" stroke="#2a579a" />
            <path d="m10 4.500 1.500 1.500L14 3" stroke="#2a579a" />
          </Svg>
        </button>
        <button type="button" aria-label="Ortografía">
          <Svg size={16} box={16}>
            <text x="7" y="6" textAnchor="middle" fontSize="7" fontWeight="700" fontFamily="Open Sans" fill="#fff">ABC</text>
            <path d="m3 10 4 4 7-7" stroke="#fff" strokeWidth="2.200" />
          </Svg>
        </button>
        <button type="button" aria-label="Personalizar barra" className="ml-1">
          <Svg size={6} box={7}><path d="M1 .5h5" stroke="#fff" /><path d="M0 3h7L3.500 7z" fill="#fff" /></Svg>
        </button>
      </div>
      <h1 className="absolute left-1/2 top-2 -translate-x-1/2 whitespace-pre leading-4">
        {'Contraseña antigua del ordenador.docx [Modo de compatibilidad]  -  Word'}
      </h1>
      <div className="flex items-center pb-[2px]">
        <button type="button" className="mr-[10px] h-[19px] w-[66px] rounded-xs bg-white text-[#2a579a]">Inic. ses.</button>
        <button type="button" aria-label="Opciones de cinta" className="flex w-[46px] justify-center">
          <Svg size={13} box={13}><path d="M.5 1.500h12v10H.5zM.5 3.500h12M6.500 10V5.500M4.500 7.500l2-2 2 2" stroke="#fff" /></Svg>
        </button>
        <button type="button" aria-label="Minimizar" className="flex w-[46px] justify-center">
          <Svg size={10} box={10}><path d="M0 5.500h10" stroke="#fff" /></Svg>
        </button>
        <button type="button" aria-label="Restaurar" className="flex w-[46px] justify-center">
          <Svg size={10} box={10}><path d="M.5 2.500h7v7h-7zM2.500 2V.5h7v7H8" stroke="#fff" /></Svg>
        </button>
        <button type="button" aria-label="Cerrar" className="flex w-[46px] justify-center">
          <Svg size={10} box={10}><path d="m0 0 10 10M10 0 0 10" stroke="#fff" /></Svg>
        </button>
      </div>
    </div>
  );
}

const ribbonTabs = ['Archivo', 'Inicio', 'Insertar', 'Diseño', 'Disposición', 'Referencias', 'Correspondencia', 'Revisar', 'Vista', 'Ayuda'];

function RibbonTabs() {
  const [active, setActive] = useState('Inicio');
  return (
    <nav className="flex h-[30px] items-stretch gap-px text-xs text-white">
      {ribbonTabs.map((tab) => (
        <button
          key={tab}
          type="button"
          onClick={() => setActive(tab)}
          className={tab === active ? 'bg-[#f2f2f2] px-[11px] text-[#2a579a]' : 'px-[11px]'}
        >
          {tab}
        </button>
      ))}
      <button type="button" className="flex items-center gap-[6px] pl-[15px]">
        <svg width="12" height="17" viewBox="0 0 12 17" fill="none" aria-hidden="true">
          <path d="M4 12q0-3-2-5Q-.5 1.500 6 .6q6.500.9 4 6.400-2 2-2 5zM4 14h4M5 16h2" stroke="#fff" strokeWidth="1.200" />
        </svg>
        ¿Qué desea hacer?
      </button>
      <button type="button" className="ml-auto flex items-center gap-1 pr-6">
        <Svg size={16} box={16}>
          <circle cx="8" cy="5" r="4" stroke="#fff" strokeWidth="1.200" />
          <path d="M1 15q0-5 5-6M12.500 9v7M9 12.500h7" stroke="#fff" strokeWidth="1.200" />
        </Svg>
        Compartir
      </button>
    </nav>
  );
}

function Launcher() {
  return (
    <button type="button" aria-label="Más opciones" className="absolute right-[5px] bottom-1">
      <Svg size={8} box={8}><path d="M.5 6V.5H6M3 3l3 3M7.500 3v4.500H3" stroke="#777" /></Svg>
    </button>
  );
}

function Group({ label, launcher = true, className, children }: { label: string; launcher?: boolean; className: string; children: ReactNode }) {
  return (
    <section className={`relative flex flex-col ${className}`}>
      <div className="h-[76px]">{children}</div>
      <h2 className={`text-center text-[11px] leading-4 text-[#333333] ${launcher ? 'pr-4' : ''}`}>{label}</h2>
      {launcher && <Launcher />}
      <span className="absolute right-0 top-1 h-[84px] w-px bg-[#d2d2d2]" />
    </section>
  );
}

function Btn({ label, pressed, children }: { label: string; pressed?: boolean; children: ReactNode }) {
  return (
    <button
      type="button"
      aria-label={label}
      className={`flex h-[23px] w-[22px] shrink-0 items-center justify-center text-[#555555] ${pressed ? 'bg-[#c5c5c5]' : ''}`}
    >
      {children}
    </button>
  );
}

function Drop({ dim }: { dim?: boolean }) {
  return (
    <button type="button" aria-label="Desplegar" className="flex h-[23px] w-3 shrink-0 items-center justify-center">
      <Caret className={dim ? 'text-[#b5b5b5]' : 'text-[#666666]'} />
    </button>
  );
}

function Sep() {
  return <span className="mx-[3px] h-5 w-[2px] shrink-0 border-l border-[#d2d2d2]" />;
}

function Clipboard() {
  return (
    <Group label="Portapapeles" className="w-[161px]">
      <div className="flex pl-[10px]">
        <button type="button" className="mt-[7px] flex w-[30px] flex-col items-center text-xs text-[#333333]">
          <Svg size={30} box={30}>
            <path d="M2 4h24v25H2z" fill="#dcd8dc" />
            <path d="M7 4h3q0-4 4-4t4 4h3v4H7z" fill="#b4b0b4" />
            <path d="M16.500 11.500h8l5 5v13h-13z" fill="#f6f4f6" stroke="#b9b4b9" />
            <path d="M24.500 11.500v5h5" stroke="#b9b4b9" />
          </Svg>
          <span className="leading-6">Pegar</span>
          <Caret />
        </button>
        <div className="ml-2 mt-[3px] flex flex-col text-xs text-[#a6a6a6]">
          <button type="button" className="flex h-[23px] items-center gap-[3px]">
            <Svg size={16} box={16}>
              <path d="m4 1 6 9M12 1 6 10" stroke="#a6a6a6" strokeWidth="1.800" />
              <circle cx="4" cy="12" r="2.700" stroke="#a6a6a6" /><circle cx="12" cy="12" r="2.700" stroke="#a6a6a6" />
            </Svg>
            Cortar
          </button>
          <button type="button" className="flex h-[23px] items-center gap-[3px]">
            <Svg size={16} box={16}>
              <path d="M1.500 1.500h6l2 2v8h-8zM3 5h4M3 7h4M3 9h4" stroke="#a6a6a6" />
              <path d="M6.500 4.500h5l3 3v7h-8z" fill="#f2f2f2" stroke="#a6a6a6" />
              <path d="M8 8h5M8 10h5M8 12h5" stroke="#a6a6a6" />
            </Svg>
            Copiar
          </button>
          <button type="button" className="flex h-[23px] items-center gap-[3px] whitespace-nowrap text-[#333333]">
            <Svg size={16} box={16}>
              <path d="m0 8 5-3 5 6-3 4-3 1z" fill="#edc587" />
              <path d="m6 4 6 6M8 6l2 2" stroke="#555" strokeWidth="3" />
              <path d="m10 6 5-5" stroke="#555" strokeWidth="3" />
            </Svg>
            Copiar formato
          </button>
        </div>
      </div>
    </Group>
  );
}

function FontGroup() {
  return (
    <Group label="Fuente" className="w-[263px]">
      <div className="flex flex-col gap-[7px] pl-1 pt-[11px]">
        <div className="flex items-center">
          <div className="relative mr-[2px] flex text-xs text-[#444444]">
            <select aria-label="Fuente" className="h-[23px] w-[95px] appearance-none border border-[#c0c0c0] bg-white pl-[3px] pr-[11px]">
              <option>Calibri (Cuerpo)</option>
            </select>
            <select aria-label="Tamaño de fuente" className="-ml-px h-[23px] w-[43px] appearance-none border border-[#c0c0c0] bg-white pl-[3px]">
              <option>28</option>
            </select>
            <Caret className="pointer-events-none absolute left-[84px] top-[10px] text-[#555555]" />
            <Caret className="pointer-events-none absolute right-[5px] top-[10px] text-[#555555]" />
          </div>
          <Btn label="Aumentar tamaño">
            <span className="text-[15px]">A</span>
            <svg width="5" height="3" viewBox="0 0 5 3" className="mb-3" aria-hidden="true"><path d="M0 3h5L2.500 0z" fill="#3f77b5" /></svg>
          </Btn>
          <Btn label="Disminuir tamaño">
            <span className="text-[13px]">A</span>
            <Caret className="mb-3 text-[#3f77b5]" />
          </Btn>
          <Sep />
          <Btn label="Cambiar mayúsculas"><span className="text-[13px]">Aa</span></Btn>
          <Drop />
          <Sep />
          <Btn label="Borrar formato">
            <Svg size={16} box={16}>
              <path d="m2 9 3-8 3 8M3 6h4" stroke="#777" strokeWidth="1.300" />
              <path d="m5 12 6-8 5 5-6 6H8z" fill="#ea8495" />
              <path d="m5 12 2-3 4 5-1 1H8z" fill="#f4b6c0" />
            </Svg>
          </Btn>
        </div>
        <div className="flex items-center text-xs">
          <Btn label="Negrita"><b>N</b></Btn>
          <Btn label="Cursiva"><b className="italic">K</b></Btn>
          <Btn label="Subrayado"><b className="underline underline-offset-2">S</b></Btn>
          <Drop />
          <Btn label="Tachado"><span className="text-[11px] line-through">abc</span></Btn>
          <Btn label="Subíndice"><b>x</b><span className="mt-2 text-[8px] font-bold text-[#3f77b5]">2</span></Btn>
          <Btn label="Superíndice"><b>x</b><span className="mb-2 text-[8px] font-bold text-[#3f77b5]">2</span></Btn>
          <Sep />
          <Btn label="Efectos de texto">
            <svg width="14" height="15" viewBox="0 0 14 15" aria-hidden="true">
              <text x="7" y="13" textAnchor="middle" fontSize="16" fontWeight="600" fontFamily="Open Sans" fill="#fff" stroke="#aaa" strokeWidth=".9">A</text>
            </svg>
          </Btn>
          <Drop dim />
          <Btn label="Color de resaltado">
            <Svg size={16} box={16}>
              <text x="5" y="8" textAnchor="middle" fontSize="10" fontFamily="Open Sans" fill="#333">ab</text>
              <path d="M15 2 8 9l-3 2 3-1z" stroke="#777" strokeWidth="2" />
              <path d="M0 12h16v4H0z" fill="#ffff00" />
            </Svg>
          </Btn>
          <Drop />
          <Btn label="Color de fuente">
            <Svg size={16} box={16}>
              <text x="8" y="11" textAnchor="middle" fontSize="14" fontWeight="600" fontFamily="Open Sans" fill="#444">A</text>
              <path d="M0 12h16v4H0z" fill="#ff0000" />
            </Svg>
          </Btn>
          <Drop />
        </div>
      </div>
    </Group>
  );
}

function ParagraphGroup() {
  return (
    <Group label="Párrafo" className="w-[225px]">
      <div className="flex flex-col gap-[7px] pl-1 pt-[11px]">
        <div className="flex items-center">
          <Btn label="Viñetas">
            <Svg size={14} box={14}>
              <path d="M5 1.500h9M5 7.500h9M5 12.500h9" stroke="#777" />
              <path d="M0 0h3v3H0zM0 6h3v3H0zM0 11h3v3H0z" fill="#3f77b5" />
            </Svg>
          </Btn>
          <Drop />
          <Btn label="Numeración">
            <Svg size={16} box={16}>
              <path d="M6 2.500h9M6 8.500h9M6 14.500h9" stroke="#777" />
              <path d="M1 1h1v3M1 4h3M1 6.500h2v1.500H1V10h2.500M1 12h2v3.500H.5M1 13.500h2" stroke="#3f77b5" />
            </Svg>
          </Btn>
          <Drop />
          <Btn label="Lista multinivel">
            <Svg size={16} box={16}>
              <path d="M5 2.500h11M9 8.500h7M12 14.500h4" stroke="#777" />
              <path d="M1 1h1v3M1 4h2M4 7h3v3H4V8.500h3M9.500 12v3.500M9.500 10v1" stroke="#3f77b5" />
            </Svg>
          </Btn>
          <Drop />
          <Sep />
          <Btn label="Disminuir sangría">
            <Svg size={16} box={16}>
              <path d="M0 1.500h16M8 4.500h8M8 7.500h8M8 10.500h8M0 13.500h16" stroke="#777" />
              <path d="m0 7 4-4v3h3v2H4v3z" fill="#3f77b5" />
            </Svg>
          </Btn>
          <Btn label="Aumentar sangría">
            <Svg size={16} box={16}>
              <path d="M0 1.500h16M8 4.500h8M8 7.500h8M8 10.500h8M0 13.500h16" stroke="#777" />
              <path d="m7 7-4-4v3H0v2h3v3z" fill="#3f77b5" />
            </Svg>
          </Btn>
          <Sep />
          <Btn label="Ordenar">
            <Svg size={16} box={16}>
              <path d="m1 7 2.500-6L6 7M2 5h3" stroke="#3f77b5" strokeWidth="1.300" />
              <path d="M1.500 9.500h4l-4 5h4" stroke="#8a4fa8" strokeWidth="1.300" />
              <path d="M12 1v13M9.500 11.500l2.500 3 2.500-3" stroke="#666" strokeWidth="1.200" />
            </Svg>
          </Btn>
          <Sep />
          <Btn label="Mostrar todo"><span className="text-lg leading-5">¶</span></Btn>
        </div>
        <div className="flex items-center">
          <Btn label="Alinear a la izquierda" pressed>
            <Svg size={14} box={14}><path d="M0 1.500h14M0 4.500h9M0 7.500h14M0 10.500h9" stroke="#666" /></Svg>
          </Btn>
          <Btn label="Centrar">
            <Svg size={14} box={14}><path d="M0 1.500h14M3 4.500h8M0 7.500h14M3 10.500h8" stroke="#666" /></Svg>
          </Btn>
          <Btn label="Alinear a la derecha">
            <Svg size={14} box={14}><path d="M0 1.500h14M5 4.500h9M0 7.500h14M5 10.500h9" stroke="#666" /></Svg>
          </Btn>
          <Btn label="Justificar">
            <Svg size={14} box={14}><path d="M0 1.500h14M0 4.500h14M0 7.500h14M0 10.500h14" stroke="#666" /></Svg>
          </Btn>
          <Sep />
          <Btn label="Interlineado">
            <Svg size={15} box={15}>
              <path d="M6 2.500h9M6 5.500h9M6 8.500h9M6 11.500h9" stroke="#666" />
              <path d="M2.500 1v5M.5 3l2-2 2 2M2.500 9v5M.5 12l2 2 2-2" stroke="#3f77b5" strokeWidth="1.400" />
            </Svg>
          </Btn>
          <Drop />
          <Sep />
          <Btn label="Sombreado">
            <Svg size={16} box={16}>
              <path d="m2 8 6-5 5 5-5 4zM6 6V1h2v4" stroke="#666" fill="#fff" />
              <path d="M11 4q5 1 4 7l-2-3z" fill="#3f77b5" />
              <path d="M.5 12.500h15v3H.5z" fill="#fff" stroke="#777" />
            </Svg>
          </Btn>
          <Drop />
          <Btn label="Bordes">
            <Svg size={13} box={13}>
              <path d="M.5 0v12M6.500 0v12M12.500 0v12M0 .5h13M0 6.500h13" stroke="#777" strokeDasharray="1 1" />
              <path d="M0 12.500h13" stroke="#666" />
            </Svg>
          </Btn>
          <Drop />
        </div>
      </div>
    </Group>
  );
}

const styleItems = [
  { name: '¶ Normal', sample: 'AaBbCcDc', font: "text-[13px] font-['Lato'] text-black" },
  { name: '¶ Sin espa...', sample: 'AaBbCcDc', font: "text-[13px] font-['Lato'] text-black" },
  { name: 'Título 1', sample: 'AaBbC', font: "text-[19px] font-['Noto_Serif','Liberation_Serif'] text-[#2e5f97]" },
  { name: 'Título 2', sample: 'AaBbCcI', font: "text-base font-['Noto_Serif','Liberation_Serif'] text-[#2e5f97]" },
  { name: 'Título', sample: 'AaB', font: "text-[32px] font-['Noto_Serif','Liberation_Serif'] text-black" },
  { name: 'Subtítulo', sample: 'AaBbCcD', font: "text-sm font-['Lato'] text-[#5a5a5a]" },
  { name: 'Énfasis sutil', sample: 'AaBbCcDc', font: "text-sm font-['Lato'] text-[#404040] italic" },
];

function StylesGroup() {
  return (
    <Group label="Estilos" className="min-w-[534px]">
      <div className="ml-[5px] mr-2 flex pt-[6px]">
        <div className="flex h-[60px] flex-1 overflow-hidden border border-[#ababab] bg-white">
          {styleItems.map((item, i) => (
            <button
              key={item.name}
              type="button"
              className={`flex w-[72px] shrink-0 flex-col items-center border-4 ${i === 0 ? 'border-[#c5c5c5]' : 'border-transparent'}`}
            >
              <span className={`flex h-[34px] w-[58px] items-center overflow-hidden whitespace-nowrap leading-[34px] ${item.font}`}>{item.sample}</span>
              <span className="whitespace-nowrap text-[11px] leading-4 text-[#555555]">{item.name}</span>
            </button>
          ))}
        </div>
        <div className="-ml-px flex w-[15px] flex-col border border-[#ababab] bg-white">
          <button type="button" aria-label="Subir" className="flex flex-1 items-center justify-center bg-[#e1e1e1]">
            <svg width="5" height="3" viewBox="0 0 5 3" aria-hidden="true"><path d="M0 3h5L2.500 0z" fill="#b5b5b5" /></svg>
          </button>
          <button type="button" aria-label="Bajar" className="flex flex-1 items-center justify-center border-y border-[#ababab]"><Caret /></button>
          <button type="button" aria-label="Más estilos" className="flex flex-1 flex-col items-center justify-center gap-[2px]">
            <span className="h-px w-[7px] bg-[#666666]" />
            <Caret />
          </button>
        </div>
      </div>
    </Group>
  );
}

function EditingGroup() {
  return (
    <Group label="Edición" launcher={false} className="w-[106px]">
      <div className="flex flex-col items-start pl-[7px] pt-[3px] text-xs text-[#333333]">
        <button type="button" className="flex h-[23px] items-center gap-1">
          <Svg size={15} box={15}>
            <circle cx="9" cy="5.500" r="4.200" stroke="#3f77b5" strokeWidth="1.800" />
            <path d="M6 8.500 1 13" stroke="#3f77b5" strokeWidth="2.800" />
          </Svg>
          Buscar
          <span className="ml-1"><Caret /></span>
        </button>
        <button type="button" className="flex h-[23px] items-center gap-1">
          <Svg size={15} box={15}>
            <text x="0" y="7" fontSize="9" fontWeight="600" fontFamily="Open Sans" fill="#555">a<tspan fill="#8a4fa8">b</tspan></text>
            <text x="5" y="14" fontSize="9" fontWeight="600" fontFamily="Open Sans" fill="#555">a<tspan fill="#3f77b5">c</tspan></text>
            <path d="M.5 9v2.500H4M2.500 10 4 11.500 2.500 13" stroke="#3f77b5" />
          </Svg>
          Reemplazar
        </button>
        <button type="button" className="flex h-[23px] items-center gap-1 whitespace-nowrap">
          <Svg size={15} box={15}><path d="M5 .8v11l2.500-2 1.500 4 2-.8-1.500-4H13z" fill="#fff" stroke="#777" /></Svg>
          Seleccionar
          <Caret />
        </button>
      </div>
    </Group>
  );
}

function WordStatusBar() {
  return (
    <footer className="flex h-[22px] shrink-0 items-center border-t border-[#c6c6c6] bg-[#f1f1f1] text-[11px] text-[#444444]">
      <span className="pl-[7px]">Página 1 de 1</span>
      <span className="pl-5">1 palabra</span>
      <span className="pl-[18px]">
        <Svg size={15} box={15}>
          <path d="M7 13V3Q4 1 1 2v9q3-.5 6 2zM7 3q1-1 2-1M7 13q2-2 5-2V9" stroke="#666" />
          <path d="m9 5 2 3 3-5" stroke="#666" strokeWidth="1.300" />
        </Svg>
      </span>
      <div className="ml-auto flex h-full items-center">
        <button type="button" aria-label="Modo de lectura" className="flex w-[38px] justify-center">
          <Svg size={13} box={13}><path d="M.5 1.500h5l1 1 1-1h5v10h-5l-1 1-1-1h-5zM6.500 2v10M2 4.500h3M2 6.500h3M2 8.500h3M8 4.500h3M8 6.500h3M8 8.500h3" stroke="#666" /></Svg>
        </button>
        <button type="button" aria-label="Diseño de impresión" className="flex h-full w-[38px] items-center justify-center bg-[#c5c5c5]">
          <Svg size={14} box={14}><path d="M.5.500h13v12H.5zM2 2.500h10M2 4.500h10M2 6.500h10M2 8.500h10M2 10.500h10" stroke="#666" /></Svg>
        </button>
        <button type="button" aria-label="Diseño web" className="flex w-[38px] justify-center">
          <Svg size={14} box={14}>
            <path d="M5 10.500H.5v-9h11V5M2 3.500h8M2 5.500h6M2 7.500h4" stroke="#666" />
            <circle cx="10" cy="9.500" r="4" fill="#777" />
            <path d="m8 8 2-1 1 2-2 1z" fill="#eee" />
          </Svg>
        </button>
        <button type="button" aria-label="Reducir" className="ml-[5px] mr-1 h-[2px] w-[6px] bg-[#555555]" />
        <input
          type="range"
          aria-label="Zoom"
          defaultValue={50}
          className="h-3 w-[100px] appearance-none bg-transparent [&::-webkit-slider-runnable-track]:h-px [&::-webkit-slider-runnable-track]:bg-[#ababab] [&::-webkit-slider-thumb]:-mt-[5px] [&::-webkit-slider-thumb]:h-[11px] [&::-webkit-slider-thumb]:w-[5px] [&::-webkit-slider-thumb]:appearance-none [&::-webkit-slider-thumb]:bg-[#666666]"
        />
        <button type="button" aria-label="Ampliar" className="ml-1">
          <Svg size={8} box={8}><path d="M4 0v8M0 4h8" stroke="#555" strokeWidth="2" /></Svg>
        </button>
        <span className="w-12 pr-[7px] text-right">100 %</span>
      </div>
    </footer>
  );
}

const remoteApps = [
  { name: 'Edge', icon: edge },
  { name: 'TeamViewer', icon: teamviewer, open: true },
  { name: 'Face', icon: face },
  { name: 'Correo', icon: mail },
  { name: 'Google', icon: google },
  { name: 'Libro', icon: book },
  { name: 'Explorador', icon: explorer, open: true },
  { name: 'Word', icon: word, active: true },
];

function RemoteTaskbar() {
  return (
    <div className="relative flex h-10 shrink-0 items-stretch bg-[#d4d4d4]">
      <button type="button" aria-label="Inicio" className="flex w-12 items-center justify-center text-black"><WindowsLogo /></button>
      <label className="flex w-[343px] items-center gap-3 border border-[#c8c8c8] bg-white pl-[11px] text-black">
        <SearchGlyph />
        <input
          type="text"
          placeholder="Escribe aquí para buscar"
          aria-label="Buscar"
          className="w-full bg-transparent text-sm outline-none placeholder:text-[#333333]"
        />
      </label>
      <div className="ml-[3px] flex">
        {remoteApps.map((app) => (
          <button
            key={app.name}
            type="button"
            aria-label={app.name}
            className={`relative flex w-[49px] items-center justify-center ${app.active ? 'bg-[#ededed]' : ''}`}
          >
            {app.icon}
            {app.open && <span className="absolute inset-x-[5px] bottom-0 h-[2px] bg-[#0078d7]" />}
            {app.active && <span className="absolute inset-x-0 bottom-0 h-[2px] bg-[#0078d7]" />}
          </button>
        ))}
      </div>
      <div className="ml-auto flex text-xs text-black">
        <button type="button" aria-label="Contactos" className="flex w-12 items-center justify-center">
          <Svg size={16} box={16}>
            <circle cx="11.500" cy="3.500" r="2.700" stroke="#111" /><circle cx="5" cy="8" r="2.700" stroke="#111" />
            <path d="M1 15q0-4 4-4t4 4M10 7q5-1 5.500 4" stroke="#111" />
          </Svg>
        </button>
        <button type="button" aria-label="Mostrar iconos ocultos" className="flex w-6 items-center justify-center bg-[#e4e4e4]">
          <Svg size={10} box={10}><path d="m0 7.500 5-5 5 5" stroke="#111" strokeWidth="1.300" /></Svg>
        </button>
        <span className="w-[68px] pt-[3px] text-center leading-4">9:42</span>
        <span className="flex w-[50px] items-start justify-center border-r border-[#a0a0a0] pr-[7px] pt-3">
          <Svg size={16} box={16}><path d="M.5.500h15v11h-4v4l-4-4h-7z" stroke="#111" /></Svg>
        </span>
        <span className="w-[5px]" />
      </div>
      <div role="tooltip" className="absolute bottom-px right-px flex h-5 items-center whitespace-nowrap border border-[#767676] bg-white px-[7px] text-[11px] text-[#575757]">
        Mostrar iconos ocultos
      </div>
    </div>
  );
}

function RemoteDesktop() {
  return (
    <div className="relative mx-[117px] mb-[138px] mt-[82px] flex flex-1 flex-col overflow-hidden">
      <div className="bg-[#2a579a]">
        <WordTitleBar />
        <RibbonTabs />
      </div>
      <div className="flex h-[93px] shrink-0 border-b border-[#d2d2d2] bg-[#f2f2f2]">
        <Clipboard />
        <FontGroup />
        <ParagraphGroup />
        <StylesGroup />
        <EditingGroup />
        <button type="button" aria-label="Contraer la cinta" className="ml-auto self-end pb-1 pr-[10px]">
          <Svg size={9} box={9}><path d="m.5 6.500 4-4 4 4" stroke="#666" strokeWidth="1.800" /></Svg>
        </button>
      </div>
      <main className="flex flex-1 justify-center bg-[#e6e6e6] pr-[17px] pt-[17px]">
        <article className="w-[793px] border border-b-0 border-[#c6c6c6] bg-white pl-28 pt-[94px]">
          <p className="w-fit border-l border-black font-['Lato'] text-[33px] leading-[44px] text-black">jM657860648*</p>
        </article>
      </main>
      <WordStatusBar />
      <RemoteTaskbar />
      <div className="absolute bottom-[90px] right-0">
        <svg width="25" height="53" viewBox="0 0 25 53" aria-hidden="true">
          <path d="M4 0h21v53L3 40q-3-2-3-5V4q0-4 4-4z" fill="#595959" />
          <path d="M25 .5H4Q.5.500.5 4v31q0 3 3 5L25 52.500" stroke="#444" fill="none" />
          <path d="M4 6h20v20H4z" fill="#0d4f80" />
          <circle cx="14" cy="16" r="8.500" fill="#666" />
          <path d="m7 16 4-3v2h6v-2l4 3-4 3v-2h-6v2z" fill="#0d4f80" />
        </svg>
      </div>
    </div>
  );
}

/* ---------- host taskbar ---------- */

type App = { name: string; icon: ReactNode; bar?: 'one' | 'many'; badge?: string };

const appRows: App[][] = [
  [
    { name: 'Explorador', icon: explorer, bar: 'many' },
    { name: 'Store', icon: store },
    { name: 'Chrome', icon: chrome, bar: 'many' },
    { name: 'Correo', icon: mail },
    { name: 'Hexágono', icon: hexagon },
    { name: 'Equipo', icon: computer },
    { name: 'VLC', icon: vlc },
    { name: 'Reloj', icon: clock },
    { name: 'Panel de control', icon: controlPanel },
    { name: 'WhatsApp', icon: whatsapp },
    { name: 'Reproductor', icon: mediaPlayer },
    { name: 'Procesador', icon: processor },
    { name: 'Cuadros', icon: squares },
    { name: 'S', icon: redS },
    { name: 'Medidor', icon: gauge },
    { name: 'CPU-Z', icon: cpuz },
    { name: 'Chip', icon: chip },
    { name: 'Earth Pro', icon: earth },
    { name: 'Vídeo', icon: video },
    { name: 'Bloc de notas', icon: notepad, bar: 'one' },
    { name: 'NVIDIA', icon: nvidia, bar: 'one' },
    { name: 'Anillo', icon: ring },
    { name: 'Monitor', icon: monitor },
    { name: 'Descargas', icon: download },
  ],
  [
    { name: 'Unidad', icon: drive },
    { name: 'USB', icon: usbTool },
    { name: 'Calculadora', icon: calculator },
    { name: 'Lupa', icon: zoomPlus },
    { name: 'Capas', icon: blueLayers },
    { name: 'JDownloader', icon: jdownloader, bar: 'one' },
    { name: 'TeamViewer', icon: teamviewer, bar: 'many' },
    { name: 'Teclado y ratón', icon: keyboardMouse },
    { name: 'Impresora', icon: printer },
    { name: 'Escáner', icon: scanner },
    { name: 'Tu teléfono', icon: yourPhone, badge: '42' },
    { name: 'Pluma', icon: feather },
    { name: 'MEGA', icon: mega },
    { name: 'Tecla', icon: whiteKey },
    { name: 'Esfera', icon: orb },
    { name: 'Tarjeta', icon: card },
    { name: 'Capas blancas', icon: whiteLayers },
    { name: 'Bombilla', icon: lightbulb },
    { name: 'Ratón', icon: purpleMouse },
    { name: 'Minecraft', icon: grassBlock, bar: 'one' },
    { name: 'Telegram', icon: telegram },
    { name: 'X', icon: yellowX },
    { name: 'Cooler Master', icon: coolerMaster },
    { name: 'RGB', icon: rgbBulb },
  ],
  [
    { name: 'Escritorio remoto', icon: remoteDesktop },
    { name: 'Nube', icon: cloudDrive },
    { name: 'Opera GX', icon: operaGx },
    { name: 'Tierra', icon: dirt },
    { name: 'Notas', icon: notes },
    { name: 'Yunque', icon: anvil },
    { name: 'Bloque', icon: darkGrassBlock },
    { name: 'Rayo', icon: redBolt },
    { name: 'Lobo', icon: wolf },
    { name: 'Galleta', icon: mouseCookie, bar: 'one' },
    { name: 'Play', icon: greenPlay },
    { name: 'H', icon: hLogo },
    { name: 'Mesa de trabajo', icon: craftingTable, bar: 'one' },
    { name: 'Visio', icon: visio },
  ],
];

function Badge({ children }: { children: ReactNode }) {
  return (
    <span className="absolute flex h-[17px] w-5 items-center justify-center rounded-full border border-[#9a9a9a] bg-[#2b2f36] text-xs font-semibold leading-none text-white">
      {children}
    </span>
  );
}

function AppButton({ app }: { app: App }) {
  return (
    <button type="button" aria-label={app.name} className="relative flex h-10 w-[49px] items-center justify-center">
      {app.icon}
      {app.badge && <span className="absolute left-[27px] top-[18px]"><Badge>{app.badge}</Badge></span>}
      {app.bar === 'one' && <span className="absolute bottom-0 h-[2px] w-10 bg-[#76b9ed]" />}
      {app.bar === 'many' && (
        <span className="absolute bottom-0 flex h-[2px] w-10">
          <span className="flex-1 bg-[#76b9ed]" />
          <span className="w-2 bg-[#5f99c6]" />
        </span>
      )}
    </button>
  );
}

function HostTaskbar() {
  return (
    <div className="flex shrink-0 items-center bg-linear-to-r from-[#233942] via-[#20313f] to-[#1a2744] text-white">
      <button type="button" aria-label="Inicio" className="flex w-12 justify-center"><WindowsLogo /></button>
      <button type="button" aria-label="Buscar" className="flex w-12 justify-center"><SearchGlyph /></button>
      <button type="button" aria-label="Cortana" className="flex w-12 justify-center">
        <Svg size={16} box={16}><circle cx="8" cy="8" r="6.700" stroke="#fff" strokeWidth="2" /></Svg>
      </button>
      <button type="button" aria-label="Vista de tareas" className="flex w-12 justify-center">
        <Svg size={16} box={16}>
          <path d="M.5 0v2.500h10V0M.5 16v-2.500h10V16M.5 4.500h10v7H.5zM14.500 0v4M14.500 8v8" stroke="#fff" />
          <path d="M13 5h3v3h-3z" fill="#fff" />
        </Svg>
      </button>
      <div className="ml-[2px] flex flex-col gap-px">
        {appRows.map((row, i) => (
          <div key={i} className="flex">
            {row.map((app) => <AppButton key={app.name} app={app} />)}
          </div>
        ))}
      </div>
      <div className="mr-1 ml-auto flex items-center self-stretch border-r border-[#8b93a0] text-xs">
        <button type="button" aria-label="Mostrar iconos ocultos" className="flex w-6 justify-center">
          <Svg size={12} box={12}><path d="m.5 8.500 5.500-5 5.500 5" stroke="#fff" strokeWidth="1.300" /></Svg>
        </button>
        <div className="grid h-full grid-cols-2 grid-rows-3 place-items-center">
          <button type="button" aria-label="Capas" className="flex w-6 justify-center">
            <Svg size={16} box={16}>
              <path d="M5 1h11l-3 12h-3z" fill="#5b9bd5" />
              <path d="M2 3h12l-3 12H0z" fill="#5b9bd5" stroke="#1f2f42" />
              <path d="M6 6h3v2H6zM5 10h3v2H5z" fill="#1f2f42" />
            </Svg>
          </button>
          <button type="button" aria-label="Quitar hardware" className="flex w-6 justify-center">
            <Svg size={16} box={16}>
              <path d="M4.500 5V.5h6V5M3.500 5.500h8v10h-8zM6 2.500h1M8 2.500h1" stroke="#fff" />
              <path d="m9 12 2 3 4-4" stroke="#aaa" strokeWidth="1.500" />
            </Svg>
          </button>
          <button type="button" aria-label="Actualizaciones" className="flex w-6 justify-center">
            <Svg size={16} box={16}>
              <path d="M.5 2.500 15.500.5v13l-15-1z" stroke="#fff" />
              <path d="M5 7q1-3 6-2M11 3v3H8M11 8q-2 3-5 2M5 12V9h3" stroke="#fff" />
              <circle cx="12.500" cy="12.500" r="3.500" fill="#ff9800" />
            </Svg>
          </button>
          <button type="button" aria-label="Red" className="flex w-6 justify-center">
            <Svg size={16} box={16}><path d="M4 2.500h11.500v8H3.500V6M9.500 11v3M6 14.500h7M.5.500h4v4h-4zM2.500 5v5H4" stroke="#fff" /></Svg>
          </button>
          <button type="button" aria-label="Volumen" className="flex w-6 justify-center">
            <Svg size={16} box={16}>
              <path d="M.5 5.500h2l4-4v12l-4-4h-2zM8.500 5q2 2.500 0 5" stroke="#fff" />
              <path d="M10.500 3q4 4.500 0 9M12.500 1q6 6.500 0 13" stroke="#7d8694" />
            </Svg>
          </button>
          <button type="button" aria-label="OneDrive" className="flex w-6 justify-center">
            <Svg size={16} box={16}>
              <path d="M2 12q-3-2-1-5 2-1 3 0 1-4 5-4t4 4q4 1 2 5z" fill="#b9bec4" />
              <circle cx="11.500" cy="11.500" r="4.500" fill="#1673d1" />
              <path d="M9 11q2-3 5 0M14 12q-2 3-5 0" stroke="#fff" />
            </Svg>
          </button>
        </div>
        <div className="w-[66px] text-center leading-[22px]">
          <p>9:42</p>
          <p>domingo</p>
          <p>18/12/2022</p>
        </div>
        <button type="button" aria-label="Notificaciones" className="relative flex w-[52px] pb-1 pl-[15px]">
          <Svg size={16} box={16}>
            <path d="M0 0h16v12h-5l-2 3v-3H0z" fill="#fff" />
            <path d="M3 3.500h10M3 6.500h10M3 9.500h7" stroke="#1c2940" />
          </Svg>
          <span className="absolute left-5 top-2"><Badge>26</Badge></span>
        </button>
      </div>
    </div>
  );
}

export default function App() {
  return (
    <div className="flex min-h-screen flex-col bg-[#1a1a1a] font-['Open_Sans','Noto_Sans',sans-serif]">
      <SessionTabs />
      <SessionToolbar />
      <RemoteDesktop />
      <HostTaskbar />
    </div>
  );
}
